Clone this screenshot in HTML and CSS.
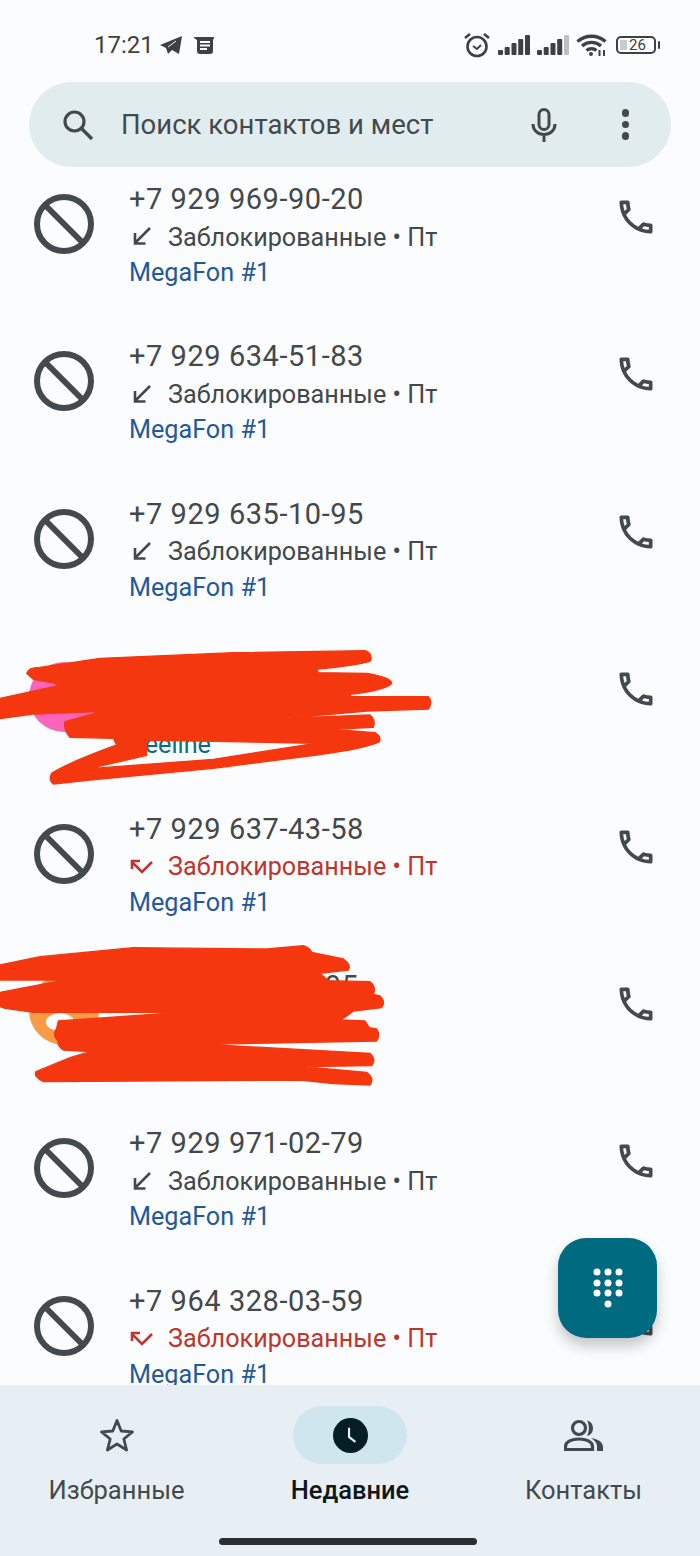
FILE: index.html
```html
<!DOCTYPE html>
<html lang="ru">
<head>
  <meta charset="UTF-8" />
  <meta name="viewport" content="width=device-width, initial-scale=1.0"/>
  <title>Недавние</title>
  <link rel="stylesheet" href="styles.css">
</head>
<body>

  <svg class="sprites" width="0" height="0">
    <symbol id="i-block" viewBox="0 0 70 70">
      <circle cx="35" cy="35" r="27" fill="none" stroke="currentColor" stroke-width="6"/>
      <path d="M16 16 54 54" stroke="currentColor" stroke-width="6"/>
    </symbol>
    <symbol id="i-call" viewBox="0 0 24 24">
      <path fill="currentColor" d="M6.54 5c.06.89.21 1.76.45 2.59l-1.2 1.2c-.41-1.2-.67-2.47-.76-3.79h1.51m9.86 12.02c.85.24 1.72.39 2.6.45v1.49c-1.32-.09-2.59-.35-3.8-.75l1.2-1.19M7.5 3H4c-.55 0-1 .45-1 1 0 9.39 7.61 17 17 17 .55 0 1-.45 1-1v-3.49c0-.55-.45-1-1-1-1.24 0-2.45-.2-3.57-.57-.1-.04-.21-.05-.31-.05-.26 0-.51.1-.71.29l-2.2 2.2c-2.83-1.45-5.15-3.76-6.59-6.59l2.2-2.2c.28-.28.36-.67.25-1.02C8.7 6.45 8.5 5.25 8.5 4c0-.55-.45-1-1-1z"/>
    </symbol>
    <symbol id="i-in" viewBox="0 0 26 26">
      <path d="M21 4 6 19M6 9v10.500h10.500" fill="none" stroke="currentColor" stroke-width="2.600"/>
    </symbol>
    <symbol id="i-missed" viewBox="0 0 26 26">
      <path d="M23 8 13 18 4 9M3 15V7h8" fill="none" stroke="currentColor" stroke-width="2.600"/>
    </symbol>
  </svg>

  <div class="status">
    <div class="status-left">
      <span class="time">17:21</span>
      <svg class="st-plane" viewBox="0 0 23 20"><path d="M0 10 22 1l-3 18-7-4-4 4-2-6z" fill="currentColor"/><path d="M8 12l8-6" stroke="#fbfcfe" stroke-width="1"/></svg>
      <svg class="st-news" viewBox="0 0 20 17"><path d="M0 0h20v1l-1 2v11a3 3 0 0 1-3 3H6a3 3 0 0 1-3-3V3L0 1z" fill="currentColor"/><path d="M6 5h10M6 8.500h10M6 12h7" stroke="#fbfcfe" stroke-width="1.800"/></svg>
    </div>
    <div class="status-right">
      <svg class="st-alarm" viewBox="0 0 26 26"><circle cx="13" cy="14.500" r="9.500" fill="none" stroke="currentColor" stroke-width="2.600"/><path d="M9 14l4 3 4-4" fill="none" stroke="currentColor" stroke-width="2"/><path d="M1 6l5-4M25 6l-5-4" stroke="currentColor" stroke-width="2.600"/></svg>
      <svg class="st-signal" viewBox="0 0 32 20"><g fill="currentColor"><rect x="0" y="15" width="5" height="5" rx="1"/><rect x="6.700" y="12" width="5" height="8" rx="1"/><rect x="13.500" y="8" width="5" height="12" rx="1"/><rect x="20.200" y="4" width="5" height="16" rx="1"/><rect x="27" y="0" width="5" height="20" rx="1"/></g></svg>
      <svg class="st-signal" viewBox="0 0 32 20"><g fill="currentColor"><rect x="0" y="15" width="5" height="5" rx="1"/><rect x="6.700" y="12" width="5" height="8" rx="1"/><rect x="13.500" y="8" width="5" height="12" rx="1"/><rect x="20.200" y="4" width="5" height="16" rx="1"/><rect x="27" y="0" width="5" height="20" rx="1" fill="#bcbfc1"/></g></svg>
      <svg class="st-wifi" viewBox="0 0 32 22"><path d="M1.500 7.500C9.500.5 21.500.5 29.500 7.500M6 12c5.500-4.800 13.500-4.800 19 0M10.500 16.500c3-2.500 7-2.500 10 0" fill="none" stroke="currentColor" stroke-width="3.400"/><circle cx="15" cy="20" r="2" fill="currentColor"/><path d="M23.500 16v6M28 16v6" stroke="currentColor" stroke-width="2"/></svg>
      <div class="battery"><span class="battery-fill"></span><span class="battery-num">26</span></div>
      <span class="battery-nub"></span>
    </div>
  </div>

  <div class="search">
    <svg class="search-ic" viewBox="0 0 34 34"><circle cx="13.500" cy="13.500" r="9.500" fill="none" stroke="currentColor" stroke-width="3.200"/><path d="M20.500 20.500 31 31" stroke="currentColor" stroke-width="3.400"/></svg>
    <span class="search-text">Поиск контактов и мест</span>
    <svg class="mic-ic" viewBox="0 0 28 36"><rect x="9" y="2.500" width="10" height="20" rx="5" fill="none" stroke="currentColor" stroke-width="3"/><path d="M3 17c0 6.500 5 10.500 11 10.500S25 23.500 25 17M14 27v8" fill="none" stroke="currentColor" stroke-width="3"/></svg>
    <div class="dots"><i></i><i></i><i></i></div>
  </div>

  <div class="list">

    <div class="row">
      <svg class="avatar block"><use href="#i-block"/></svg>
      <div class="info">
        <div class="phone">+7 929 969-90-20</div>
        <div class="sub"><svg class="dir"><use href="#i-in"/></svg>Заблокированные • Пт</div>
        <div class="sim">MegaFon #1</div>
      </div>
      <svg class="call"><use href="#i-call"/></svg>
    </div>

    <div class="row">
      <svg class="avatar block"><use href="#i-block"/></svg>
      <div class="info">
        <div class="phone">+7 929 634-51-83</div>
        <div class="sub"><svg class="dir"><use href="#i-in"/></svg>Заблокированные • Пт</div>
        <div class="sim">MegaFon #1</div>
      </div>
      <svg class="call"><use href="#i-call"/></svg>
    </div>

    <div class="row">
      <svg class="avatar block"><use href="#i-block"/></svg>
      <div class="info">
        <div class="phone">+7 929 635-10-95</div>
        <div class="sub"><svg class="dir"><use href="#i-in"/></svg>Заблокированные • Пт</div>
        <div class="sim">MegaFon #1</div>
      </div>
      <svg class="call"><use href="#i-call"/></svg>
    </div>

    <div class="row">
      <div class="avatar pink"></div>
      <div class="info">
        <div class="phone">&nbsp;</div>
        <div class="sub">&nbsp;</div>
        <div class="sim teal">Beeline</div>
      </div>
      <svg class="call"><use href="#i-call"/></svg>
      <svg class="scribble scribble-a" viewBox="0 0 1350 450">
        <path fill-rule="evenodd" d="M80 100Q85 82 120 82L300 55 700 38 1095 32Q1118 40 1112 62 1100 72 950 88L955 98 1100 100Q1175 112 1175 130 1160 150 1050 163L1052 170H1285Q1300 185 1285 207L1100 213 1000 222 850 235 1110 225Q1128 240 1120 262L1000 268 1125 278Q1145 290 1138 305 1100 325 950 345L640 385 270 420 160 432Q145 420 155 400 200 370 350 315L340 295 210 292Q190 270 195 245L285 220 290 215 100 222 0 236V175L175 137 165 130 100 118ZM268 386 440 346 440 300 945 310 640 358Z"/>
      </svg>
    </div>

    <div class="row">
      <svg class="avatar block"><use href="#i-block"/></svg>
      <div class="info">
        <div class="phone">+7 929 637-43-58</div>
        <div class="sub missed"><svg class="dir"><use href="#i-missed"/></svg>Заблокированные • Пт</div>
        <div class="sim">MegaFon #1</div>
      </div>
      <svg class="call"><use href="#i-call"/></svg>
    </div>

    <div class="row">
      <div class="avatar orange"><span class="avatar-mark"></span></div>
      <div class="info">
        <div class="phone phone-end">95</div>
        <div class="sub">&nbsp;</div>
        <div class="sim">&nbsp;</div>
      </div>
      <svg class="call"><use href="#i-call"/></svg>
      <svg class="scribble scribble-b" viewBox="0 0 1350 480">
        <path d="M0 90 120 65 400 38 800 42 910 32Q930 38 935 52L1030 72Q1055 90 1045 105L960 115 985 137 1110 140Q1130 155 1120 178L1140 183Q1158 200 1145 218L1060 228Q1040 245 1020 255L1095 258 1108 278 1130 282Q1142 300 1130 318L620 328 1110 355Q1130 375 1115 392L910 395 1100 412Q1125 430 1110 450L1000 446 900 435 130 440Q100 425 108 410L210 368 270 350 190 345Q170 330 175 318 155 300 170 280L175 258 540 232 100 232 15 220 0 215V172L195 135H0Z"/>
      </svg>
    </div>

    <div class="row">
      <svg class="avatar block"><use href="#i-block"/></svg>
      <div class="info">
        <div class="phone">+7 929 971-02-79</div>
        <div class="sub"><svg class="dir"><use href="#i-in"/></svg>Заблокированные • Пт</div>
        <div class="sim">MegaFon #1</div>
      </div>
      <svg class="call"><use href="#i-call"/></svg>
    </div>

    <div class="row">
      <svg class="avatar block"><use href="#i-block"/></svg>
      <div class="info">
        <div class="phone">+7 964 328-03-59</div>
        <div class="sub missed"><svg class="dir"><use href="#i-missed"/></svg>Заблокированные • Пт</div>
        <div class="sim">MegaFon #1</div>
      </div>
      <svg class="call"><use href="#i-call"/></svg>
    </div>

    <div class="fab">
      <svg viewBox="0 0 32 42"><g fill="#fff"><circle cx="5" cy="5" r="3.500"/><circle cx="16" cy="5" r="3.500"/><circle cx="27" cy="5" r="3.500"/><circle cx="5" cy="16" r="3.500"/><circle cx="16" cy="16" r="3.500"/><circle cx="27" cy="16" r="3.500"/><circle cx="5" cy="26" r="3.500"/><circle cx="16" cy="26" r="3.500"/><circle cx="27" cy="26" r="3.500"/><circle cx="16" cy="37" r="3.500"/></g></svg>
    </div>
  </div>

  <div class="nav">
    <div class="tabs">
      <div class="tab">
        <div class="tab-ic">
          <svg class="star" viewBox="0 0 36 36"><path d="M18 3.500 22.200 14 33.500 14.800 24.800 22 27.600 33 18 27 8.400 33 11.200 22 2.500 14.800 13.800 14z" fill="none" stroke="currentColor" stroke-width="2.800" stroke-linejoin="round"/></svg>
        </div>
        <span class="tab-label">Избранные</span>
      </div>
      <div class="tab active">
        <div class="tab-ic">
          <svg class="clock" viewBox="0 0 36 36"><circle cx="18" cy="18" r="18" fill="#041e26"/><path d="M16.500 10v9.500l6.500 5" fill="none" stroke="#e8f1f4" stroke-width="2.200"/></svg>
        </div>
        <span class="tab-label">Недавние</span>
      </div>
      <div class="tab">
        <div class="tab-ic">
          <svg class="people" viewBox="0 0 40 32"><circle cx="15" cy="9" r="6.500" fill="none" stroke="currentColor" stroke-width="3.200"/><path d="M1.500 30.500v-3c0-5 6.500-7.500 13.500-7.500s13.500 2.500 13.500 7.500v3z" fill="none" stroke="currentColor" stroke-width="3.200"/><path d="M23 1.500a8 8 0 0 1 0 15.500c2.500-4.500 2.500-11 0-15.500zM27 19c7 1 12 4 12 9v4h-6v-5c0-3-2.500-6-6-8z" fill="currentColor"/></svg>
        </div>
        <span class="tab-label">Контакты</span>
      </div>
    </div>
    <div class="home-bar"></div>
  </div>

</body>
</html>
```

FILE: styles.css
```css
html, body {
  margin: 0;
  height: 100%;
}
body {
  width: 700px;
  height: 1556px;
  display: flex;
  flex-direction: column;
  overflow: hidden;
  background: #fbfcfe;
  color: #43484b;
  font-family: Roboto, "Noto Sans", sans-serif;
}
.sprites {
  position: absolute;
}

/* status bar */
.status {
  height: 82px;
  flex: none;
  box-sizing: border-box;
  padding: 30px 40px 0 94px;
  display: flex;
  justify-content: space-between;
  align-items: flex-start;
  color: #3d4144;
}
.status-left, .status-right {
  display: flex;
  align-items: center;
  height: 30px;
}
.time {
  font-size: 24px;
  width: 66px;
}
.st-plane { width: 23px; height: 20px; margin-right: 11px; }
.st-news { width: 20px; height: 17px; }
.st-alarm { width: 26px; height: 26px; margin-right: 8px; }
.st-signal { width: 32px; height: 20px; margin-right: 7px; }
.st-wifi { width: 32px; height: 22px; margin-right: 8px; }
.battery {
  width: 40px;
  height: 18px;
  box-sizing: border-box;
  border: 2px solid #3d4144;
  border-radius: 5px;
  display: flex;
  align-items: center;
  justify-content: center;
  overflow: hidden;
  padding-left: 4px;
  position: relative;
}
.battery-fill {
  position: absolute;
  left: 2px;
  top: 2px;
  bottom: 2px;
  width: 7px;
  background: #c9cccd;
}
.battery-num {
  font-size: 15px;
  line-height: 14px;
  position: relative;
}
.battery-nub {
  width: 2.5px;
  height: 8px;
  margin-left: 2px;
  background: #3d4144;
  border-radius: 1px;
}

/* search */
.search {
  flex: none;
  height: 85px;
  margin: 0 29px;
  padding: 0 42px 0 32px;
  display: flex;
  align-items: center;
  background: #e1ecef;
  border-radius: 43px;
  color: #43494c;
}
.search-ic { width: 34px; height: 34px; flex: none; }
.search-text {
  flex: 1;
  margin-left: 26px;
  font-size: 27.500px;
}
.mic-ic { width: 28px; height: 36px; margin-right: 64px; }
.dots {
  display: flex;
  flex-direction: column;
  gap: 4px;
}
.dots i {
  width: 7.500px;
  height: 7.500px;
  border-radius: 50%;
  background: #43494c;
}

/* call list */
.list {
  flex: 1;
  min-height: 0;
  overflow: hidden;
  position: relative;
}
.row {
  height: 157.400px;
  box-sizing: border-box;
  padding: 15px 0 0 29px;
  display: flex;
  align-items: flex-start;
  position: relative;
}
.avatar {
  width: 70px;
  height: 70px;
  flex: none;
  margin-top: 7px;
  border-radius: 50%;
}
.block { color: #43494c; border-radius: 0; }
.pink { background: #fb64b8; margin-top: 8px; }
.orange {
  background: #f99a45;
  margin-top: 6px;
  position: relative;
}
.avatar-mark {
  position: absolute;
  left: 17px;
  top: 38px;
  width: 28px;
  height: 18px;
  background: #fff;
  border-radius: 50%;
}
.info {
  flex: 1;
  margin-left: 30px;
  font-size: 25.200px;
  line-height: 35.500px;
}
.phone {
  font-size: 29px;
  height: 37.500px;
  line-height: 34.500px;
  letter-spacing: .55px;
}
.phone-end {
  padding-left: 196px;
}
.sub {
  display: flex;
  align-items: center;
}
.dir {
  width: 26px;
  height: 26px;
  margin-right: 13px;
  flex: none;
}
.missed { color: #c0342c; }
.sim { color: #23589f; }
.teal { color: #0d6d7d; }
.call {
  width: 44px;
  height: 44px;
  margin: 13px 42px 0 0;
  flex: none;
  color: #43494c;
}

/* hand drawn red marks over hidden rows, viewBox is 3x page pixels */
.scribble {
  position: absolute;
  left: 0;
  top: 1px;
  width: 450px;
  height: 150px;
  fill: #f5370f;
  stroke: #f5370f;
  stroke-width: 4;
  stroke-linejoin: round;
  overflow: visible;
}
.scribble-b {
  top: -19px;
  height: 160px;
}
.fab {
  position: absolute;
  right: 43px;
  bottom: 47px;
  width: 99px;
  height: 100px;
  border-radius: 28px;
  background: #006a80;
  box-shadow: 0 8px 14px rgba(0,0,0,0.22);
  display: flex;
  align-items: center;
  justify-content: center;
}
.fab svg {
  width: 32px;
  height: 42px;
}

/* bottom navigation */
.nav {
  flex: none;
  height: 171px;
  background: #e7eff4;
  position: relative;
}
.tabs {
  display: grid;
  grid-template-columns: 233px 234px 233px;
  padding-top: 21px;
}
.tab {
  display: flex;
  flex-direction: column;
  align-items: center;
  color: #43494c;
}
.tab-ic {
  width: 114px;
  height: 58px;
  border-radius: 29px;
  display: flex;
  align-items: center;
  justify-content: center;
}
.active .tab-ic { background: #cfe6ef; }
.active { color: #111618; }
.tab-label {
  margin-top: 9px;
  font-size: 25.500px;
  line-height: 34px;
}
.active .tab-label { font-weight: 500; }
.star { width: 36px; height: 36px; }
.clock { width: 35px; height: 35px; }
.people { width: 40px; height: 32px; }
.home-bar {
  position: absolute;
  left: 219px;
  top: 153px;
  width: 258px;
  height: 7px;
  border-radius: 4px;
  background: #2b2f31;
}
```
